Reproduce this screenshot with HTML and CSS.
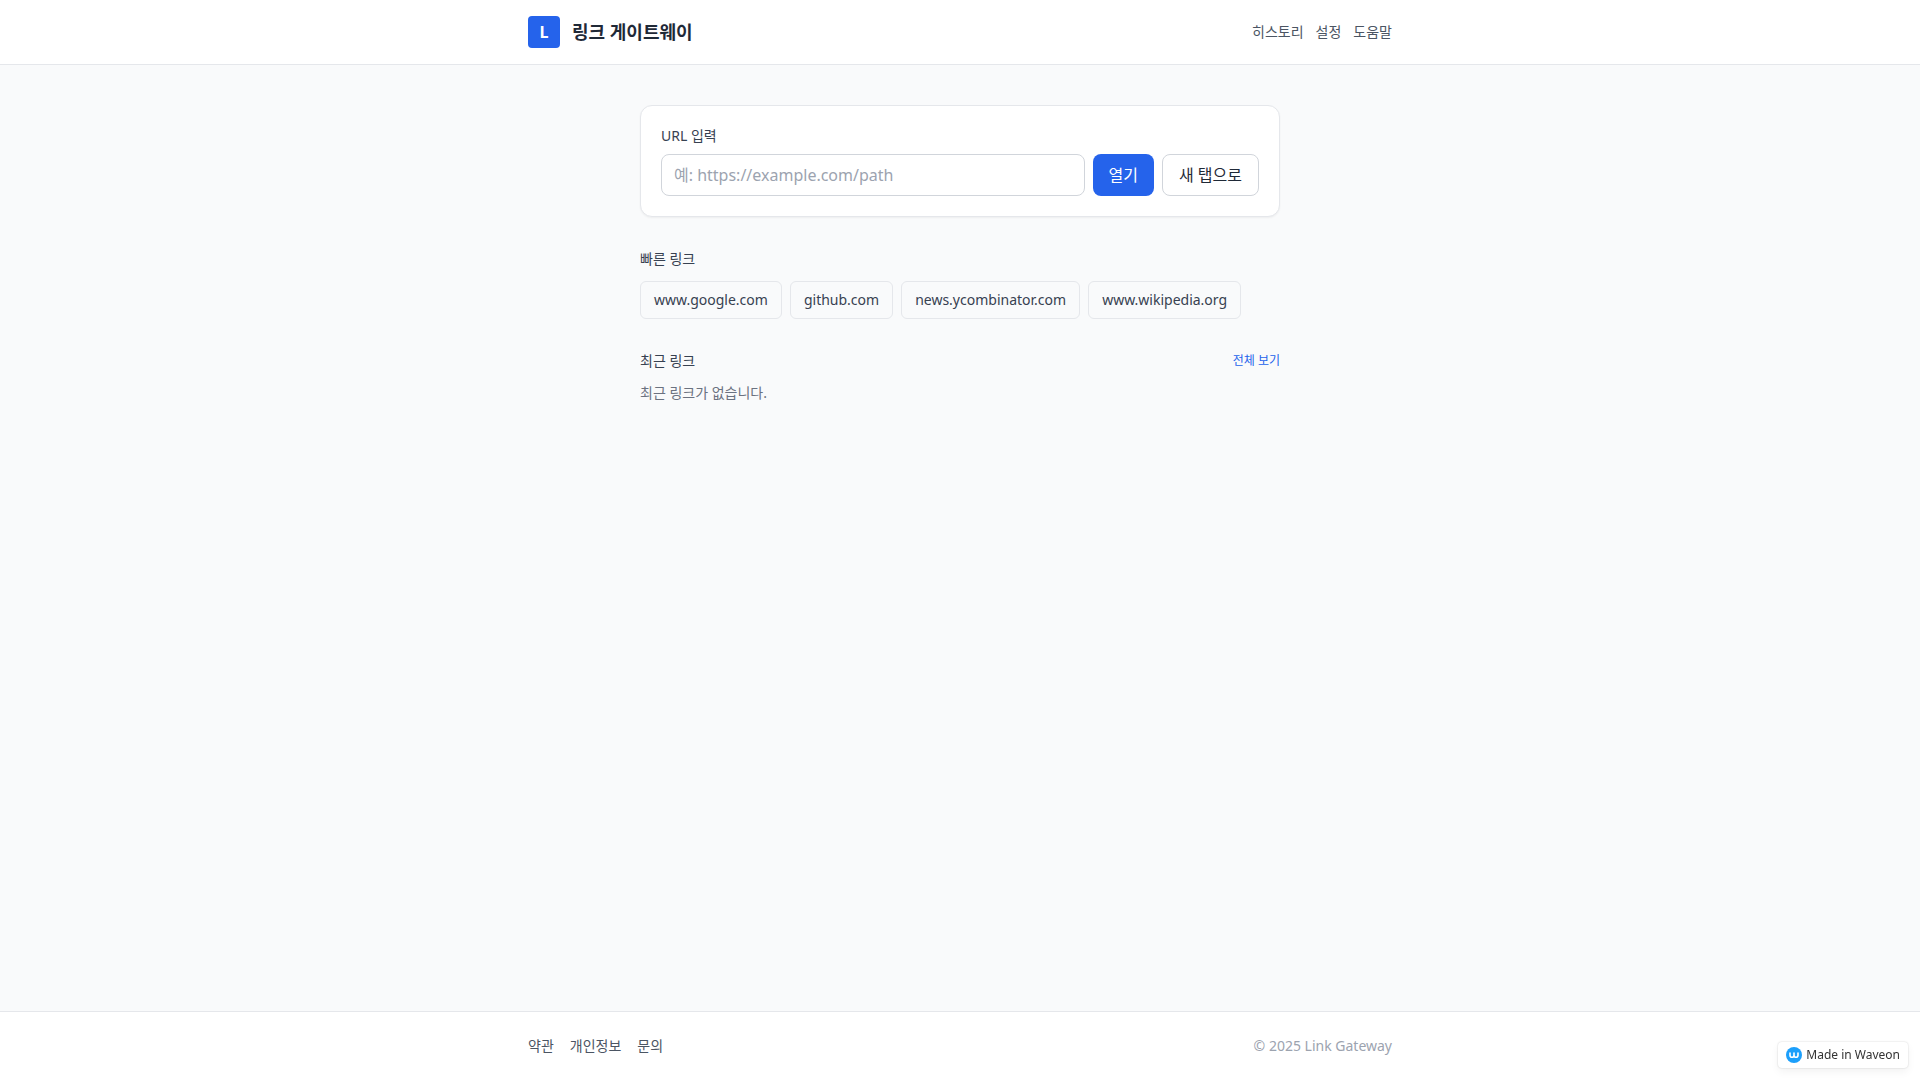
FILE: index.html
```html
<!DOCTYPE html>
<html lang="ko">
<head>
<meta charset="utf-8">
<meta name="viewport" content="width=device-width, initial-scale=1">
<title>링크 게이트웨이</title>
<link rel="stylesheet" href="styles.css">
</head>
<body>
<header class="site-header">
  <div class="container header-row">
    <a class="brand" href="#"><span class="brand-mark">L</span><span class="brand-name">링크 게이트웨이</span></a>
    <nav class="header-nav">
      <a href="#">히스토리</a>
      <a href="#">설정</a>
      <a href="#">도움말</a>
    </nav>
  </div>
</header>
<main class="main">
  <form class="card">
    <label class="label" for="url">URL 입력</label>
    <div class="url-row">
      <input class="url-input" id="url" type="text" placeholder="예: https://example.com/path">
      <button class="button button-primary" type="submit">열기</button>
      <button class="button button-outline" type="button">새 탭으로</button>
    </div>
  </form>
  <section class="section">
    <h2 class="section-title">빠른 링크</h2>
    <div class="chips">
      <button class="chip" type="button">www.google.com</button>
      <button class="chip" type="button">github.com</button>
      <button class="chip" type="button">news.ycombinator.com</button>
      <button class="chip" type="button">www.wikipedia.org</button>
    </div>
  </section>
  <section class="section">
    <div class="section-head">
      <h2 class="section-title">최근 링크</h2>
      <a class="view-all" href="#">전체 보기</a>
    </div>
    <p class="empty">최근 링크가 없습니다.</p>
  </section>
</main>
<footer class="site-footer">
  <div class="container footer-row">
    <nav class="footer-nav">
      <a href="#">약관</a>
      <a href="#">개인정보</a>
      <a href="#">문의</a>
    </nav>
    <span class="copyright">© 2025 Link Gateway</span>
  </div>
</footer>
<a class="badge" href="#">
  <svg class="badge-icon" viewBox="0 0 16 16" aria-hidden="true">
    <circle cx="8" cy="8" r="8" fill="#1c9ffb"/>
    <path d="M4 6v2.2a2 2 0 0 0 4 0V6v2.2a2 2 0 0 0 4 0V6" fill="none" stroke="#fff" stroke-width="1.6" stroke-linecap="round" stroke-linejoin="round"/>
  </svg>
  <span>Made in Waveon</span>
</a>
</body>
</html>
```
FILE: styles.css
```css
*, *::before, *::after {
  box-sizing: border-box;
}

body {
  display: flex;
  flex-direction: column;
  min-height: 100vh;
  margin: 0;
  background: #f9fafb;
  color: #1f2937;
  font-family: "Noto Sans", "Noto Sans CJK KR", sans-serif;
  font-size: 14px;
  line-height: 20px;
}

a {
  color: inherit;
  text-decoration: none;
}

h2, p {
  margin: 0;
}

button, input {
  margin: 0;
  font: inherit;
  color: inherit;
}

button {
  cursor: pointer;
}

.container {
  width: 100%;
  max-width: 896px;
  margin: 0 auto;
  padding: 0 16px;
}

.site-header {
  background: #fff;
  border-bottom: 1px solid #e5e7eb;
}

.header-row {
  display: flex;
  align-items: center;
  justify-content: space-between;
  height: 64px;
}

.brand {
  display: flex;
  align-items: center;
  gap: 12px;
}

.brand-mark {
  display: flex;
  align-items: center;
  justify-content: center;
  width: 32px;
  height: 32px;
  border-radius: 4px;
  background: #2563eb;
  color: #fff;
  font-size: 16px;
  font-weight: 700;
}

.brand-name {
  font-size: 18px;
  line-height: 28px;
  font-weight: 600;
}

.header-nav {
  display: flex;
  gap: 12px;
  color: #4b5563;
}

.main {
  flex: 1;
  width: 100%;
  max-width: 672px;
  margin: 0 auto;
  padding: 40px 16px;
}

.card {
  padding: 20px;
  background: #fff;
  border: 1px solid #e5e7eb;
  border-radius: 12px;
  box-shadow: 0 1px 2px rgb(0 0 0 / 5%);
}

.label {
  display: block;
  margin-bottom: 8px;
  color: #374151;
}

.url-row {
  display: flex;
  gap: 8px;
}

.url-input {
  flex: 1;
  min-width: 0;
  height: 42px;
  padding: 8px 12px;
  background: #fff;
  border: 1px solid #d1d5db;
  border-radius: 8px;
  font-size: 16px;
  line-height: 24px;
}

.url-input::placeholder {
  color: #9ca3af;
  opacity: 1;
}

.button {
  padding: 8px 16px;
  border: 0;
  border-radius: 8px;
  font-size: 16px;
  line-height: 24px;
}

.button-primary {
  background: #2563eb;
  color: #fff;
}

.button-outline {
  background: #fff;
  border: 1px solid #d1d5db;
}

.section {
  margin-top: 32px;
}

.section-title {
  color: #374151;
  font-size: 14px;
  font-weight: 400;
}

.chips {
  display: flex;
  flex-wrap: wrap;
  gap: 8px;
  margin-top: 12px;
}

.chip {
  padding: 8px 13px;
  background: transparent;
  border: 1px solid #e5e7eb;
  border-radius: 6px;
  color: #374151;
}

.section-head {
  display: flex;
  align-items: center;
  justify-content: space-between;
  margin-bottom: 12px;
}

.view-all {
  color: #2563eb;
  font-size: 12px;
  line-height: 16px;
}

.empty {
  color: #6b7280;
}

.site-footer {
  background: #fff;
  border-top: 1px solid #e5e7eb;
}

.footer-row {
  display: flex;
  align-items: center;
  justify-content: space-between;
  padding: 24px 16px;
}

.footer-nav {
  display: flex;
  gap: 16px;
  color: #4b5563;
}

.copyright {
  color: #9ca3af;
}

.badge {
  position: fixed;
  right: 12px;
  bottom: 12px;
  display: flex;
  align-items: center;
  gap: 4px;
  padding: 5px 8px;
  background: #fff;
  border-radius: 4px;
  box-shadow: 0 0 2px rgb(0 0 0 / 20%), 0 4px 8px rgb(0 0 0 / 5%);
  color: #333;
  font-size: 12px;
  line-height: 16px;
}

.badge-icon {
  width: 16px;
  height: 16px;
}
```
